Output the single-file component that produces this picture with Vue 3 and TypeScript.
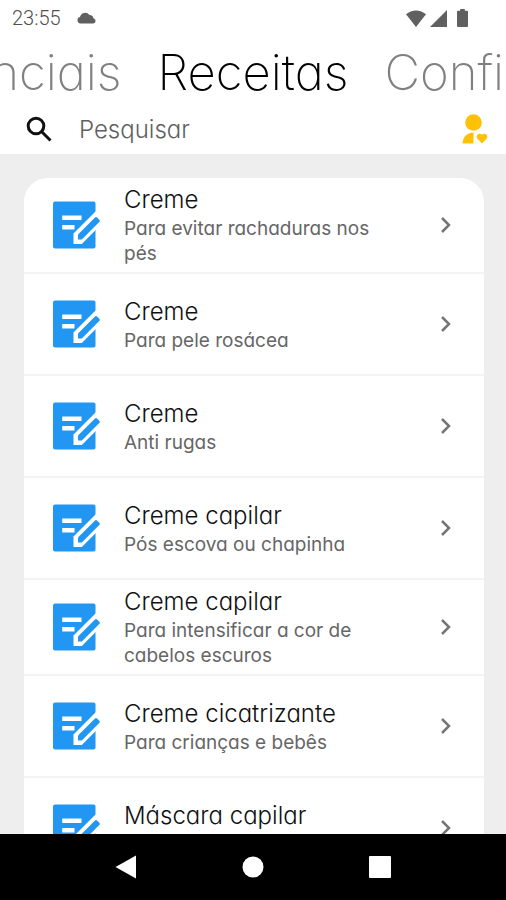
<script setup lang="ts">
import { ref } from 'vue'

interface Recipe {
  title: string
  description: string
  long?: boolean
}

const query = ref('')

const recipes: Recipe[] = [
  { title: 'Creme', description: 'Para evitar rachaduras nos pés', long: true },
  { title: 'Creme', description: 'Para pele rosácea' },
  { title: 'Creme', description: 'Anti rugas' },
  { title: 'Creme capilar', description: 'Pós escova ou chapinha' },
  { title: 'Creme capilar', description: 'Para intensificar a cor de cabelos escuros', long: true },
  { title: 'Creme cicatrizante', description: 'Para crianças e bebês' },
  { title: 'Máscara capilar', description: 'Hidratação' },
]
</script>

<template>
  <div class="app">
    <header class="top">
      <div class="status">
        <span class="clock">23:55</span>
        <svg class="cloud" viewBox="0 0 20 12" aria-hidden="true">
          <path d="M3.600 11.600A3.300 3.300 0 0 1 3 5.100 5.200 5.200 0 0 1 12.400 3a4 4 0 0 1 4 3.200 2.800 2.800 0 0 1 .2 5.400z" />
        </svg>
        <div class="signals">
          <svg class="wifi" viewBox="0 0 20 17" aria-hidden="true">
            <path d="M0 4.200C5.800-.9 14.200-.9 20 4.200L10 17z" />
          </svg>
          <svg class="cell" viewBox="0 0 17 17" aria-hidden="true">
            <path d="M17 0v17H0z" />
          </svg>
          <svg class="battery" viewBox="0 0 11 18" aria-hidden="true">
            <path d="M3.200 0h4.600v1.800H10a1 1 0 0 1 1 1V17a1 1 0 0 1-1 1H1a1 1 0 0 1-1-1V2.800a1 1 0 0 1 1-1h2.200z" />
          </svg>
        </div>
      </div>

      <nav class="tabs">
        <div class="side before"><a href="#essenciais" class="tab">Essenciais</a></div>
        <a href="#receitas" class="tab active" aria-current="page">Receitas</a>
        <div class="side"><a href="#confi" class="tab">Confi</a></div>
      </nav>

      <form class="search" role="search" @submit.prevent>
        <label for="search" aria-label="Pesquisar">
          <svg class="lens" viewBox="0 0 26 26" aria-hidden="true">
            <circle cx="10" cy="10" r="7.800" />
            <path d="M15.500 15.500L24.500 24.500" />
          </svg>
        </label>
        <input id="search" v-model="query" type="text" placeholder="Pesquisar" />
        <button type="button" class="favorites" aria-label="Favoritos">
          <svg viewBox="0 0 26 30" aria-hidden="true">
            <circle cx="11.500" cy="8.500" r="8.300" />
            <path d="M.5 29.500C.8 23 4.500 19 11.500 18.500v11z" />
            <path d="M20 29.500l-4.300-4.400c-3-3.400 1.600-7.200 4.300-4.300 2.700-2.900 7.300.9 4.300 4.300z" />
          </svg>
        </button>
      </form>
    </header>

    <main class="content">
      <ul class="card">
        <li v-for="(recipe, index) in recipes" :key="index">
          <a href="#receita" class="row" :class="{ long: recipe.long }">
            <svg class="note" viewBox="0 0 48 48" aria-hidden="true">
              <rect class="paper" x="0" y="0.500" width="42.500" height="47" rx="2" />
              <path class="halo" d="M20.500 43V32.500L43 10V28.800L28.800 43z" />
              <path class="paper" d="M25 38.500V33.500L42 16.500Q43 15.600 44 16.500L46.500 19Q47.200 20 46.500 20.800L28.800 38.500z" />
              <path class="halo" d="M9.200 14.500h19.300v4.500H9.200zM9.200 24h12.300v4.500H9.200z" />
            </svg>
            <span class="text">
              <span class="title">{{ recipe.title }}</span>
              <span class="description">{{ recipe.description }}</span>
            </span>
            <svg class="chevron" viewBox="0 0 12 18" aria-hidden="true">
              <path d="M2 2l7 7-7 7" />
            </svg>
          </a>
        </li>
      </ul>
    </main>

    <footer class="system">
      <button type="button" aria-label="Voltar">
        <svg viewBox="0 0 24 24" aria-hidden="true"><path d="M22 .5v23L1.500 12z" /></svg>
      </button>
      <button type="button" aria-label="Início">
        <svg viewBox="0 0 24 24" aria-hidden="true"><circle cx="12" cy="12" r="10.500" /></svg>
      </button>
      <button type="button" aria-label="Recentes">
        <svg viewBox="0 0 24 24" aria-hidden="true"><rect x="1" y="1" width="22" height="22" rx="1" /></svg>
      </button>
    </footer>
  </div>
</template>

<style>
body {
  margin: 0;
}
</style>

<style scoped>
.app {
  display: flex;
  flex-direction: column;
  height: 100vh;
  overflow: hidden;
  background: #eeeeee;
  color: #111111;
  font-family: Inter, "Open Sans", sans-serif;
  font-feature-settings: "cv11";
  font-weight: 300;
}

a {
  color: inherit;
  text-decoration: none;
}

button {
  display: flex;
  padding: 0;
  border: 0;
  background: none;
}

.top {
  flex: none;
  background: #ffffff;
}

.status {
  display: flex;
  align-items: center;
  height: 36px;
  padding: 0 38px 0 12px;
  color: #505050;
}

.status svg {
  fill: #606060;
}

.clock {
  font-family: Roboto, sans-serif;
  font-size: 20px;
  font-weight: 300;
}

.cloud {
  width: 20px;
  height: 12px;
  margin-left: 16px;
}

.signals {
  display: flex;
  align-items: center;
  gap: 4px;
  margin-left: auto;
}

.wifi {
  width: 20px;
  height: 17px;
}

.cell {
  width: 17px;
  height: 17px;
}

.battery {
  width: 11px;
  height: 18px;
  margin-left: 6px;
}

.tabs {
  display: grid;
  grid-template-columns: minmax(0, 1fr) auto minmax(0, 1fr);
  gap: 36px;
  height: 70px;
  line-height: 74px;
  font-size: 49px;
  font-weight: 200;
  white-space: nowrap;
}

.side {
  display: flex;
  overflow: hidden;
}

.before {
  justify-content: flex-end;
}

.tab {
  color: #808080;
}

.active {
  color: #000000;
}

.search {
  display: flex;
  align-items: center;
  height: 46px;
  padding: 0 18px 2px 26px;
}

.search label {
  display: flex;
}

.lens {
  width: 26px;
  height: 26px;
  fill: none;
  stroke: #111111;
  stroke-width: 3;
}

.search input {
  flex: 1;
  min-width: 0;
  margin-left: 27px;
  padding: 0;
  border: 0;
  outline: 0;
  background: none;
  font: inherit;
  font-size: 24px;
  font-feature-settings: inherit;
  color: #111111;
}

.search input::placeholder {
  color: #606060;
  opacity: 1;
}

.favorites svg {
  width: 26px;
  height: 30px;
  fill: #ffc107;
}

.content {
  flex: 1;
  min-height: 0;
  overflow: hidden;
  padding: 24px 22px 0 24px;
}

.card {
  margin: 0;
  padding: 0;
  list-style: none;
  background: #ffffff;
  border-radius: 24px 24px 0 0;
}

.row {
  display: flex;
  align-items: center;
  box-sizing: border-box;
  min-height: 102px;
  padding: 0 32px 0 29px;
  border-bottom: 2px solid #f3f3f3;
}

.long {
  min-height: 96px;
}

.note {
  flex: none;
  width: 48px;
  height: 48px;
}

.paper {
  fill: #2196f3;
}

.halo {
  fill: #ffffff;
}

.text {
  flex: 1;
  min-width: 0;
  margin: 0 52px 0 23px;
}

.title,
.description {
  display: block;
}

.title {
  font-size: 24px;
  line-height: 32px;
}

.description {
  color: #666666;
  font-size: 19px;
  font-weight: 400;
  line-height: 25px;
}

.chevron {
  flex: none;
  width: 12px;
  height: 18px;
  fill: none;
  stroke: #757575;
  stroke-width: 2.5;
}

.system {
  flex: none;
  display: flex;
  justify-content: center;
  align-items: center;
  gap: 103px;
  height: 66px;
  background: #000000;
}

.system svg {
  width: 24px;
  height: 24px;
  fill: #ffffff;
}
</style>
